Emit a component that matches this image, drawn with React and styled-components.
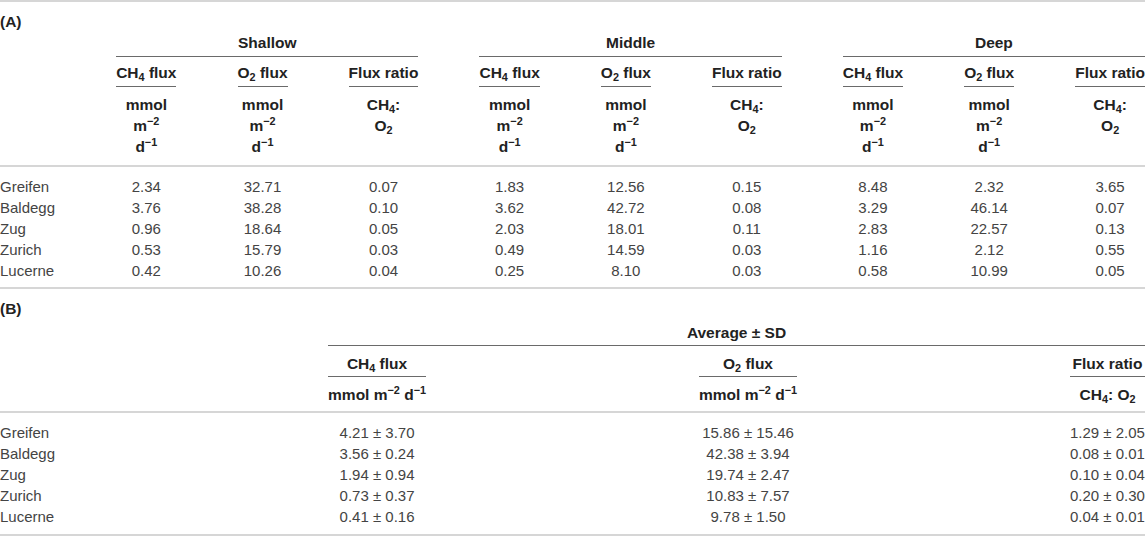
import React from "react";
import styled, { createGlobalStyle } from "styled-components";

const GlobalStyle = createGlobalStyle`
  html, body { margin: 0; padding: 0; background: #fff; }
  body { font-family: "Liberation Sans", Arial, Helvetica, sans-serif; color: #222; }
`;

const Page = styled.div`
  width: 1145px;
`;

const Section = styled.section`
  border-top: 2px solid #d6d6d6;
  padding-bottom: ${(p) => p.$pb}px;
  &:last-child {
    border-bottom: 2px solid #d6d6d6;
  }
`;

const SectionLabel = styled.div`
  font-weight: 700;
  font-size: 15.5px;
  line-height: 21px;
  padding-top: ${(p) => p.$pt}px;
  color: #222;
`;

const Grid = styled.div`
  display: grid;
  grid-template-columns: repeat(${(p) => p.$cols}, max-content);
  justify-content: space-between;
`;

const GroupHead = styled.div`
  grid-column: ${(p) => p.$span};
  font-weight: 700;
  font-size: 15.5px;
  line-height: 21px;
  text-align: center;
  padding-top: ${(p) => p.$pt}px;
  padding-bottom: ${(p) => p.$pb}px;
  border-bottom: ${(p) => (p.$empty ? "none" : "1px solid #6a6a6a")};
  color: #222;
`;

const ColHead = styled.div`
  font-weight: 700;
  font-size: 15.5px;
  line-height: 21px;
  text-align: center;
  white-space: nowrap;
  padding-top: ${(p) => p.$pt}px;
  padding-bottom: 2.5px;
  border-bottom: ${(p) => (p.$empty ? "none" : "1px solid #6a6a6a")};
  color: #222;
`;

const UnitCell = styled.div`
  font-weight: 700;
  font-size: 15.5px;
  line-height: 21px;
  text-align: center;
  white-space: nowrap;
  padding-top: ${(p) => p.$pt}px;
  color: #222;
`;

const Rule = styled.div`
  grid-column: 1 / -1;
  border-top: 2px solid #d6d6d6;
  margin-top: ${(p) => p.$mt}px;
  margin-bottom: 9px;
`;

const RowLabel = styled.div`
  font-size: 15px;
  line-height: 21px;
  color: #444;
  text-align: left;
  white-space: nowrap;
`;

const Value = styled.div`
  font-size: 15px;
  line-height: 21px;
  color: #444;
  text-align: center;
  white-space: nowrap;
`;

const Sub = styled.sub`
  font-size: 0.7em;
  vertical-align: -0.25em;
  line-height: 0;
`;

const Sup = styled.sup`
  font-size: 0.7em;
  vertical-align: 0.55em;
  line-height: 0;
`;

const CH4 = () => (
  <>
    CH<Sub>4</Sub>
  </>
);
const O2 = () => (
  <>
    O<Sub>2</Sub>
  </>
);

const headers = [
  { key: "ch4", title: <><CH4 /> flux</> },
  { key: "o2", title: <><O2 /> flux</> },
  { key: "ratio", title: "Flux ratio" },
];

const unitsStacked = {
  ch4: (
    <>
      mmol
      <br />m<Sup>−2</Sup>
      <br />d<Sup>−1</Sup>
    </>
  ),
  o2: (
    <>
      mmol
      <br />m<Sup>−2</Sup>
      <br />d<Sup>−1</Sup>
    </>
  ),
  ratio: (
    <>
      <CH4 />:
      <br />
      <O2 />
    </>
  ),
};

const unitsInline = {
  ch4: (
    <>
      mmol m<Sup>−2</Sup> d<Sup>−1</Sup>
    </>
  ),
  o2: (
    <>
      mmol m<Sup>−2</Sup> d<Sup>−1</Sup>
    </>
  ),
  ratio: (
    <>
      <CH4 />: <O2 />
    </>
  ),
};

const groupsA = ["Shallow", "Middle", "Deep"];

const dataA = [
  ["Greifen", "2.34", "32.71", "0.07", "1.83", "12.56", "0.15", "8.48", "2.32", "3.65"],
  ["Baldegg", "3.76", "38.28", "0.10", "3.62", "42.72", "0.08", "3.29", "46.14", "0.07"],
  ["Zug", "0.96", "18.64", "0.05", "2.03", "18.01", "0.11", "2.83", "22.57", "0.13"],
  ["Zurich", "0.53", "15.79", "0.03", "0.49", "14.59", "0.03", "1.16", "2.12", "0.55"],
  ["Lucerne", "0.42", "10.26", "0.04", "0.25", "8.10", "0.03", "0.58", "10.99", "0.05"],
];

const dataB = [
  ["Greifen", "4.21 ± 3.70", "15.86 ± 15.46", "1.29 ± 2.05"],
  ["Baldegg", "3.56 ± 0.24", "42.38 ± 3.94", "0.08 ± 0.01"],
  ["Zug", "1.94 ± 0.94", "19.74 ± 2.47", "0.10 ± 0.04"],
  ["Zurich", "0.73 ± 0.37", "10.83 ± 7.57", "0.20 ± 0.30"],
  ["Lucerne", "0.41 ± 0.16", "9.78 ± 1.50", "0.04 ± 0.01"],
];

const DataRows = ({ rows }) =>
  rows.map((row) => (
    <React.Fragment key={row[0]}>
      <RowLabel>{row[0]}</RowLabel>
      {row.slice(1).map((v, i) => (
        <Value key={i}>{v}</Value>
      ))}
    </React.Fragment>
  ));

const TableA = () => (
  <Section $pb={6.5}>
    <SectionLabel $pt={9}>(A)</SectionLabel>
    <Grid $cols={10}>
      <GroupHead $span="1" $empty $pt={0} $pb={3} />
      {groupsA.map((g) => (
        <GroupHead key={g} $span="span 3" $pt={0} $pb={3}>
          {g}
        </GroupHead>
      ))}

      <ColHead $empty $pt={5} />
      {groupsA.map((g) =>
        headers.map((h) => (
          <ColHead key={g + h.key} $pt={5}>
            {h.title}
          </ColHead>
        ))
      )}

      <UnitCell $pt={7} />
      {groupsA.map((g) =>
        headers.map((h) => (
          <UnitCell key={g + h.key} $pt={7}>
            {unitsStacked[h.key]}
          </UnitCell>
        ))
      )}

      <Rule $mt={8} />
      <DataRows rows={dataA} />
    </Grid>
  </Section>
);

const TableB = () => (
  <Section $pb={7}>
    <SectionLabel $pt={8.5}>(B)</SectionLabel>
    <Grid $cols={4}>
      <GroupHead $span="1" $empty $pt={3} $pb={2} />
      <GroupHead $span="span 3" $pt={3} $pb={2}>
        Average ± SD
      </GroupHead>

      <ColHead $empty $pt={7} />
      {headers.map((h) => (
        <ColHead key={h.key} $pt={7}>
          {h.title}
        </ColHead>
      ))}

      <UnitCell $pt={6.5} />
      {headers.map((h) => (
        <UnitCell key={h.key} $pt={6.5}>
          {unitsInline[h.key]}
        </UnitCell>
      ))}

      <Rule $mt={6} />
      <DataRows rows={dataB} />
    </Grid>
  </Section>
);

export default function App() {
  return (
    <>
      <GlobalStyle />
      <Page>
        <TableA />
        <TableB />
      </Page>
    </>
  );
}
